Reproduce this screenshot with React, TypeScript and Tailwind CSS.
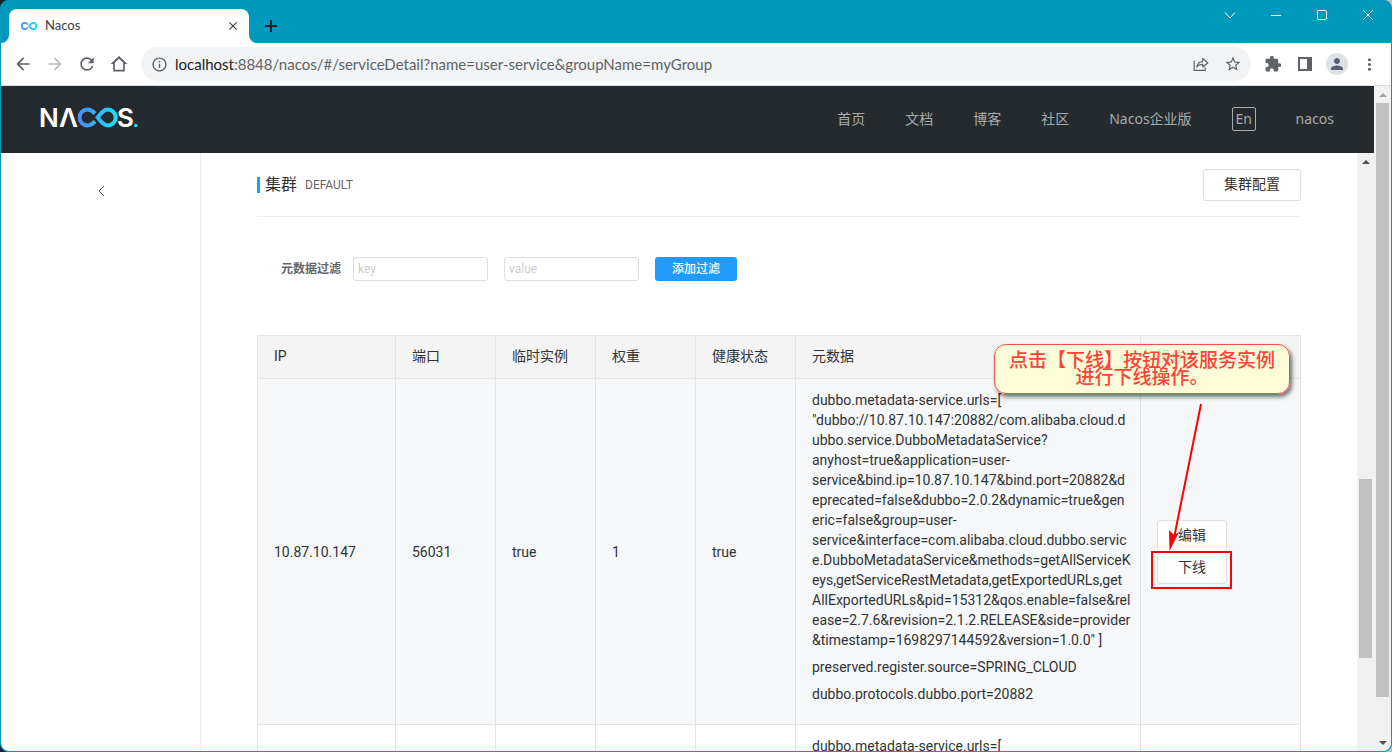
import { useState, type ReactNode } from 'react'
import {
  MdArrowBack,
  MdArrowForward,
  MdClose,
  MdExtension,
  MdInfoOutline,
  MdMoreVert,
  MdPerson,
  MdRefresh,
  MdStarBorder,
} from 'react-icons/md'

const NAV = ['首页', '文档', '博客', '社区', 'Nacos企业版']

const COLUMNS = ['IP', '端口', '临时实例', '权重', '健康状态', '元数据', '操作']

const METADATA_URLS = [
  'dubbo.metadata-service.urls=[',
  '"dubbo://10.87.10.147:20882/com.alibaba.cloud.d',
  'ubbo.service.DubboMetadataService?',
  'anyhost=true&application=user-',
  'service&bind.ip=10.87.10.147&bind.port=20882&d',
  'eprecated=false&dubbo=2.0.2&dynamic=true&gen',
  'eric=false&group=user-',
  'service&interface=com.alibaba.cloud.dubbo.servic',
  'e.DubboMetadataService&methods=getAllServiceK',
  'eys,getServiceRestMetadata,getExportedURLs,get',
  'AllExportedURLs&pid=15312&qos.enable=false&rel',
  'ease=2.7.6&revision=2.1.2.RELEASE&side=provider',
  '&timestamp=1698297144592&version=1.0.0" ]',
].join('\n')

const METADATA = [METADATA_URLS, 'preserved.register.source=SPRING_CLOUD', 'dubbo.protocols.dubbo.port=20882']

function Infinity({ className, id }: { className: string; id: string }) {
  return (
    <svg viewBox="0 0 40 20" className={className} fill="none">
      <defs>
        <linearGradient id={id} x1="0" y1="0" x2="40" y2="0" gradientUnits="userSpaceOnUse">
          <stop offset="0" stopColor="#4a8cff" />
          <stop offset="1" stopColor="#16e4f5" />
        </linearGradient>
      </defs>
      <g stroke={`url(#${id})`} strokeWidth="4.4">
        <path d="M17.6 6.4 C15.2 3.6 12.8 2 9.9 2 A7.9 7.9 0 0 0 9.9 18 C13 18 15.4 16.2 17.6 13.6" />
        <path d="M20.4 10 C24 5.6 26.4 2 30.2 2 A7.9 7.9 0 0 1 30.2 18 C26.4 18 24 14.4 20.4 10 Z" />
      </g>
    </svg>
  )
}

function Logo() {
  return (
    <svg width="98" height="22" viewBox="0 1 98 22" className="overflow-visible" role="img" aria-label="Nacos">
      <defs>
        <linearGradient id="logo" x1="37" y1="0" x2="77" y2="0" gradientUnits="userSpaceOnUse">
          <stop offset="0" stopColor="#4a8cff" />
          <stop offset="1" stopColor="#16e4f5" />
        </linearGradient>
      </defs>
      <g fill="#fff" fontFamily="Inter, sans-serif" fontSize="26" fontWeight="600">
        <text x="-2" y="20">N</text>
        <text x="18" y="20">Λ</text>
        <text x="76" y="20">S</text>
      </g>
      <g fill="none" stroke="url(#logo)" strokeWidth="4">
        <path d="M54 6.5 C51.6 4 49.6 2.6 46.4 2.6 A7.9 7.9 0 0 0 46.4 18.4 C49.6 18.4 51.6 17 54 14.4" />
        <path d="M56.6 10.5 C60.2 6.2 62.6 2.6 66.8 2.6 A7.9 7.9 0 0 1 66.8 18.4 C62.6 18.4 60.2 14.8 56.6 10.5 Z" />
      </g>
      <circle cx="94.8" cy="18.5" r="1.8" fill="#16e4f5" />
    </svg>
  )
}

function WindowButton({ label, children }: { label: string; children: ReactNode }) {
  return (
    <button aria-label={label} className="flex h-7 w-[46px] items-center justify-center">
      <svg width="12" height="12" viewBox="0 0 12 12" fill="none" stroke="#fff">
        {children}
      </svg>
    </button>
  )
}

function TitleBar() {
  return (
    <div className="flex h-[42px] shrink-0 justify-between pl-2">
      <div className="flex items-end">
        <div className="relative flex h-[34px] w-[240px] items-center rounded-t-lg bg-white pl-3 pr-2">
          <svg className="absolute bottom-0 -left-2" width="8" height="8" fill="#fff">
            <path d="M8 0 V8 H0 A8 8 0 0 0 8 0 Z" />
          </svg>
          <svg className="absolute bottom-0 -right-2" width="8" height="8" fill="#fff">
            <path d="M0 0 V8 H8 A8 8 0 0 1 0 0 Z" />
          </svg>
          <Infinity id="favicon" className="h-2 w-4" />
          <span className="ml-2 flex-1 font-[Lato] text-[13px] text-[#3c4043]">Nacos</span>
          <button aria-label="Close tab" className="flex size-4 items-center justify-center text-[#3c4043]">
            <MdClose size={14} />
          </button>
        </div>
        <button aria-label="New tab" className="ml-4 mb-[11px] flex size-3 items-center justify-center">
          <svg width="12" height="12" viewBox="0 0 12 12" stroke="#202124" strokeWidth="2">
            <path d="M6 0V12M0 6H12" />
          </svg>
        </button>
      </div>
      <div className="flex">
        <WindowButton label="Search tabs">
          <path d="M1 3.5L6 9L11 3.5" />
        </WindowButton>
        <WindowButton label="Minimize">
          <path d="M1 6.5H11" />
        </WindowButton>
        <WindowButton label="Maximize">
          <rect x="1.5" y="1.5" width="9" height="9" rx="1" />
        </WindowButton>
        <WindowButton label="Close">
          <path d="M1 1L11 11M11 1L1 11" />
        </WindowButton>
      </div>
    </div>
  )
}

function ToolButton({ label, children }: { label: string; children: ReactNode }) {
  return (
    <button aria-label={label} className="flex h-8 w-8 shrink-0 items-center justify-center">
      {children}
    </button>
  )
}

function Toolbar() {
  return (
    <div className="flex h-[43px] shrink-0 items-center border-b border-[#dadce0] bg-white px-1.5 text-[#5f6368]">
      <ToolButton label="Back">
        <MdArrowBack size={20} />
      </ToolButton>
      <ToolButton label="Forward">
        <MdArrowForward size={20} className="text-[#babcbe]" />
      </ToolButton>
      <ToolButton label="Reload">
        <MdRefresh size={20} />
      </ToolButton>
      <ToolButton label="Home">
        <svg width="20" height="20" viewBox="0 0 24 24" fill="currentColor">
          <path d="M12 2.5L2 12h3v9h14v-9h3L12 2.5zM17 19H7v-8.6l5-4.8 5 4.8V19z" />
        </svg>
      </ToolButton>
      <div className="mx-1.5 flex h-[34px] min-w-0 flex-1 items-center rounded-full bg-[#f1f3f4] pl-2.5 pr-0.5">
        <MdInfoOutline size={17} className="shrink-0" />
        <p className="ml-[7px] flex-1 truncate font-[Lato] text-[15px]">
          <span className="text-[#202124]">localhost</span>
          :8848/nacos/#/serviceDetail?name=user-service&groupName=myGroup
        </p>
        <ToolButton label="Share">
          <svg width="16" height="16" viewBox="0 0 16 16" fill="none" stroke="currentColor" strokeWidth="1.2">
            <path d="M1.2 4.5V14.4H12.2V11.5" />
            <path d="M3.8 11C4.4 7.6 6.4 5.7 9.8 5.6V2.4L14.8 7L9.8 11V8.3C7.2 8.2 5.3 9 3.8 11Z" strokeLinejoin="round" />
          </svg>
        </ToolButton>
        <ToolButton label="Bookmark">
          <MdStarBorder size={18} />
        </ToolButton>
      </div>
      <ToolButton label="Extensions">
        <MdExtension size={18} />
      </ToolButton>
      <ToolButton label="Side panel">
        <svg width="14" height="14" viewBox="0 0 14 14" fill="currentColor">
          <path d="M0 0H14V14H0ZM2 2V12H9V2Z" fillRule="evenodd" />
        </svg>
      </ToolButton>
      <ToolButton label="Profile">
        <span className="flex size-[22px] items-center justify-center rounded-full bg-[#dee1e6]">
          <MdPerson size={18} className="text-[#565f76]" />
        </span>
      </ToolButton>
      <ToolButton label="Menu">
        <MdMoreVert size={19} />
      </ToolButton>
    </div>
  )
}

function ScrollArrow({ down, faded }: { down?: boolean; faded?: boolean }) {
  return (
    <div className="flex h-[17px] shrink-0 items-center justify-center">
      <svg width="8" height="4" viewBox="0 0 8 4" fill={faded ? '#a3a3a3' : '#505050'}>
        <path d={down ? 'M0 0H8L4 4Z' : 'M0 4H8L4 0Z'} />
      </svg>
    </div>
  )
}

function SiteHeader() {
  return (
    <header className="flex h-[67px] shrink-0 items-center justify-between bg-[#252a2f] px-10 pb-0.5">
      <Logo />
      <nav className="flex items-center gap-10 text-sm text-[#a8aaac]">
        {NAV.map(item => (
          <a key={item} href="#">{item}</a>
        ))}
        <button className="h-6 w-6 rounded-xs border border-[#a8aaac] leading-5">En</button>
        <a href="#">nacos</a>
      </nav>
    </header>
  )
}

function Callout() {
  return (
    <div className="pointer-events-none">
      <p className="absolute -left-[163px] -top-44 z-10 flex h-[50px] w-[296px] flex-col items-center justify-center rounded-xl border border-[#f05050] bg-[#ffffd2]/80 text-[19px] leading-[17px] font-medium whitespace-nowrap text-[#ff4338] shadow-[2px_3px_4px_rgba(0,0,0,0.55)]">
        <span>点击【下线】按钮对该服务实例</span>
        <span>进行下线操作。</span>
      </p>
      <svg className="absolute -top-[117px] left-2 z-10" width="40" height="150" viewBox="0 0 40 150">
        <path d="M36 1L9 135" stroke="#f00" strokeWidth="2" />
        <path d="M4.5 148L4 127L9 132L14 129Z" fill="#f00" />
      </svg>
      <span className="absolute -left-1.5 top-[31px] z-10 h-[38px] w-[81px] border-2 border-[#f00]" />
    </div>
  )
}

function ActionButton({ children }: { children: ReactNode }) {
  return (
    <button className="h-8 w-[70px] rounded-[3px] border border-[#dcdee3] bg-white pb-0.5 text-sm text-[#333]">
      {children}
    </button>
  )
}

function InstanceRow({ port, striped, annotated }: { port: string; striped?: boolean; annotated?: boolean }) {
  const cell = 'border-r border-b border-[#e3e4e6] px-4'
  return (
    <tr className={striped ? 'bg-[#f5f7f9]' : 'bg-white'}>
      <td className={cell}>10.87.10.147</td>
      <td className={cell}>{port}</td>
      <td className={cell}>true</td>
      <td className={cell}>1</td>
      <td className={cell}>true</td>
      <td className={`${cell} pt-[11px] pb-5 leading-5 whitespace-pre`}>
        <div className="flex flex-col gap-[7px]">
          {METADATA.map(line => (
            <p key={line}>{line}</p>
          ))}
        </div>
      </td>
      <td className={cell}>
        <div className="relative flex w-[70px] flex-col">
          <ActionButton>编辑</ActionButton>
          <ActionButton>下线</ActionButton>
          {annotated && <Callout />}
        </div>
      </td>
    </tr>
  )
}

function ClusterPanel() {
  const [key, setKey]     = useState('')
  const [value, setValue] = useState('')

  const input =
    'h-6 w-[135px] rounded-[3px] border border-[#dcdee3] px-1 text-xs text-[#333] placeholder-[#ccc] focus:outline-none'

  return (
    <main className="min-w-0 flex-1 overflow-hidden px-14 pt-4 text-[#333]">
      <div className="flex items-center justify-between border-b border-[#eee] pb-[15px]">
        <h2 className="flex items-center text-base">
          <span className="mr-[5px] h-4 w-[3px] bg-[#209bfa]" />
          集群
          <span className="ml-2 text-xs text-[#666]">DEFAULT</span>
        </h2>
        <button className="h-8 w-[98px] rounded-[3px] border border-[#dcdee3] pb-0.5 text-sm">集群配置</button>
      </div>

      {/* Metadata filter */}
      <form className="mt-10 flex items-center pl-6" onSubmit={e => e.preventDefault()}>
        <label htmlFor="meta-key" className="mr-3 text-xs font-bold text-[#666]">元数据过滤</label>
        <input id="meta-key" value={key} onChange={e => setKey(e.target.value)} placeholder="key" className={input} />
        <input
          aria-label="value"
          value={value}
          onChange={e => setValue(e.target.value)}
          placeholder="value"
          className={`${input} ml-4`}
        />
        <button className="ml-4 h-6 w-[82px] rounded-[3px] bg-[#209bfa] text-xs font-medium text-white">添加过滤</button>
      </form>

      {/* Instances */}
      <table className="mt-[54px] w-full table-fixed border-separate border-spacing-0 border-t border-l border-[#e3e4e6] text-sm">
        <colgroup>
          <col className="w-[138px]" />
          <col className="w-[100px]" />
          <col className="w-[100px]" />
          <col className="w-[100px]" />
          <col className="w-[100px]" />
          <col className="w-[345px]" />
          <col />
        </colgroup>
        <thead>
          <tr className="h-[43px] bg-[#f4f4f4]">
            {COLUMNS.map(name => (
              <th key={name} className="border-r border-b border-[#e3e4e6] px-4 pb-0.5 text-left font-normal">{name}</th>
            ))}
          </tr>
        </thead>
        <tbody>
          <InstanceRow port="56031" striped annotated />
          <InstanceRow port="56032" />
        </tbody>
      </table>
    </main>
  )
}

export default function App() {
  return (
    <div className="h-screen bg-linear-to-r from-[#10222c] to-[#b8c4bd]">
      <div className="flex h-full flex-col overflow-hidden rounded-lg border border-[#0099bc] bg-[#0099bc] font-['Noto_Sans','Noto_Sans_CJK_SC',sans-serif]">
        <TitleBar />
        <Toolbar />
        <div className="flex min-h-0 flex-1 overflow-hidden rounded-b-lg bg-white">
          <div className="flex min-w-0 flex-1 flex-col">
            <SiteHeader />
            <div className="flex min-h-0 flex-1 font-[Roboto,'Noto_Sans_CJK_SC',sans-serif]">
              <aside className="flex w-[200px] shrink-0 items-start justify-center border-r border-[#ebecec] pt-8">
                <button aria-label="Back to list">
                  <svg width="8" height="12" viewBox="0 0 8 12" fill="none" stroke="#555">
                    <path d="M7 1L2 6L7 11" />
                  </svg>
                </button>
              </aside>
              <ClusterPanel />
              <div className="flex w-[17px] shrink-0 flex-col bg-[#f1f1f1]">
                <ScrollArrow />
                <div className="flex-[309]" />
                <div className="mx-0.5 flex-[179] bg-[#c1c1c1]" />
                <div className="flex-[93]" />
              </div>
            </div>
          </div>
          <div className="flex w-[17px] shrink-0 flex-col bg-[#f1f1f1]">
            <ScrollArrow faded />
            <div className="mx-0.5 flex-[594] bg-[#c1c1c1]" />
            <div className="flex-[37]" />
            <ScrollArrow down />
          </div>
        </div>
      </div>
    </div>
  )
}
